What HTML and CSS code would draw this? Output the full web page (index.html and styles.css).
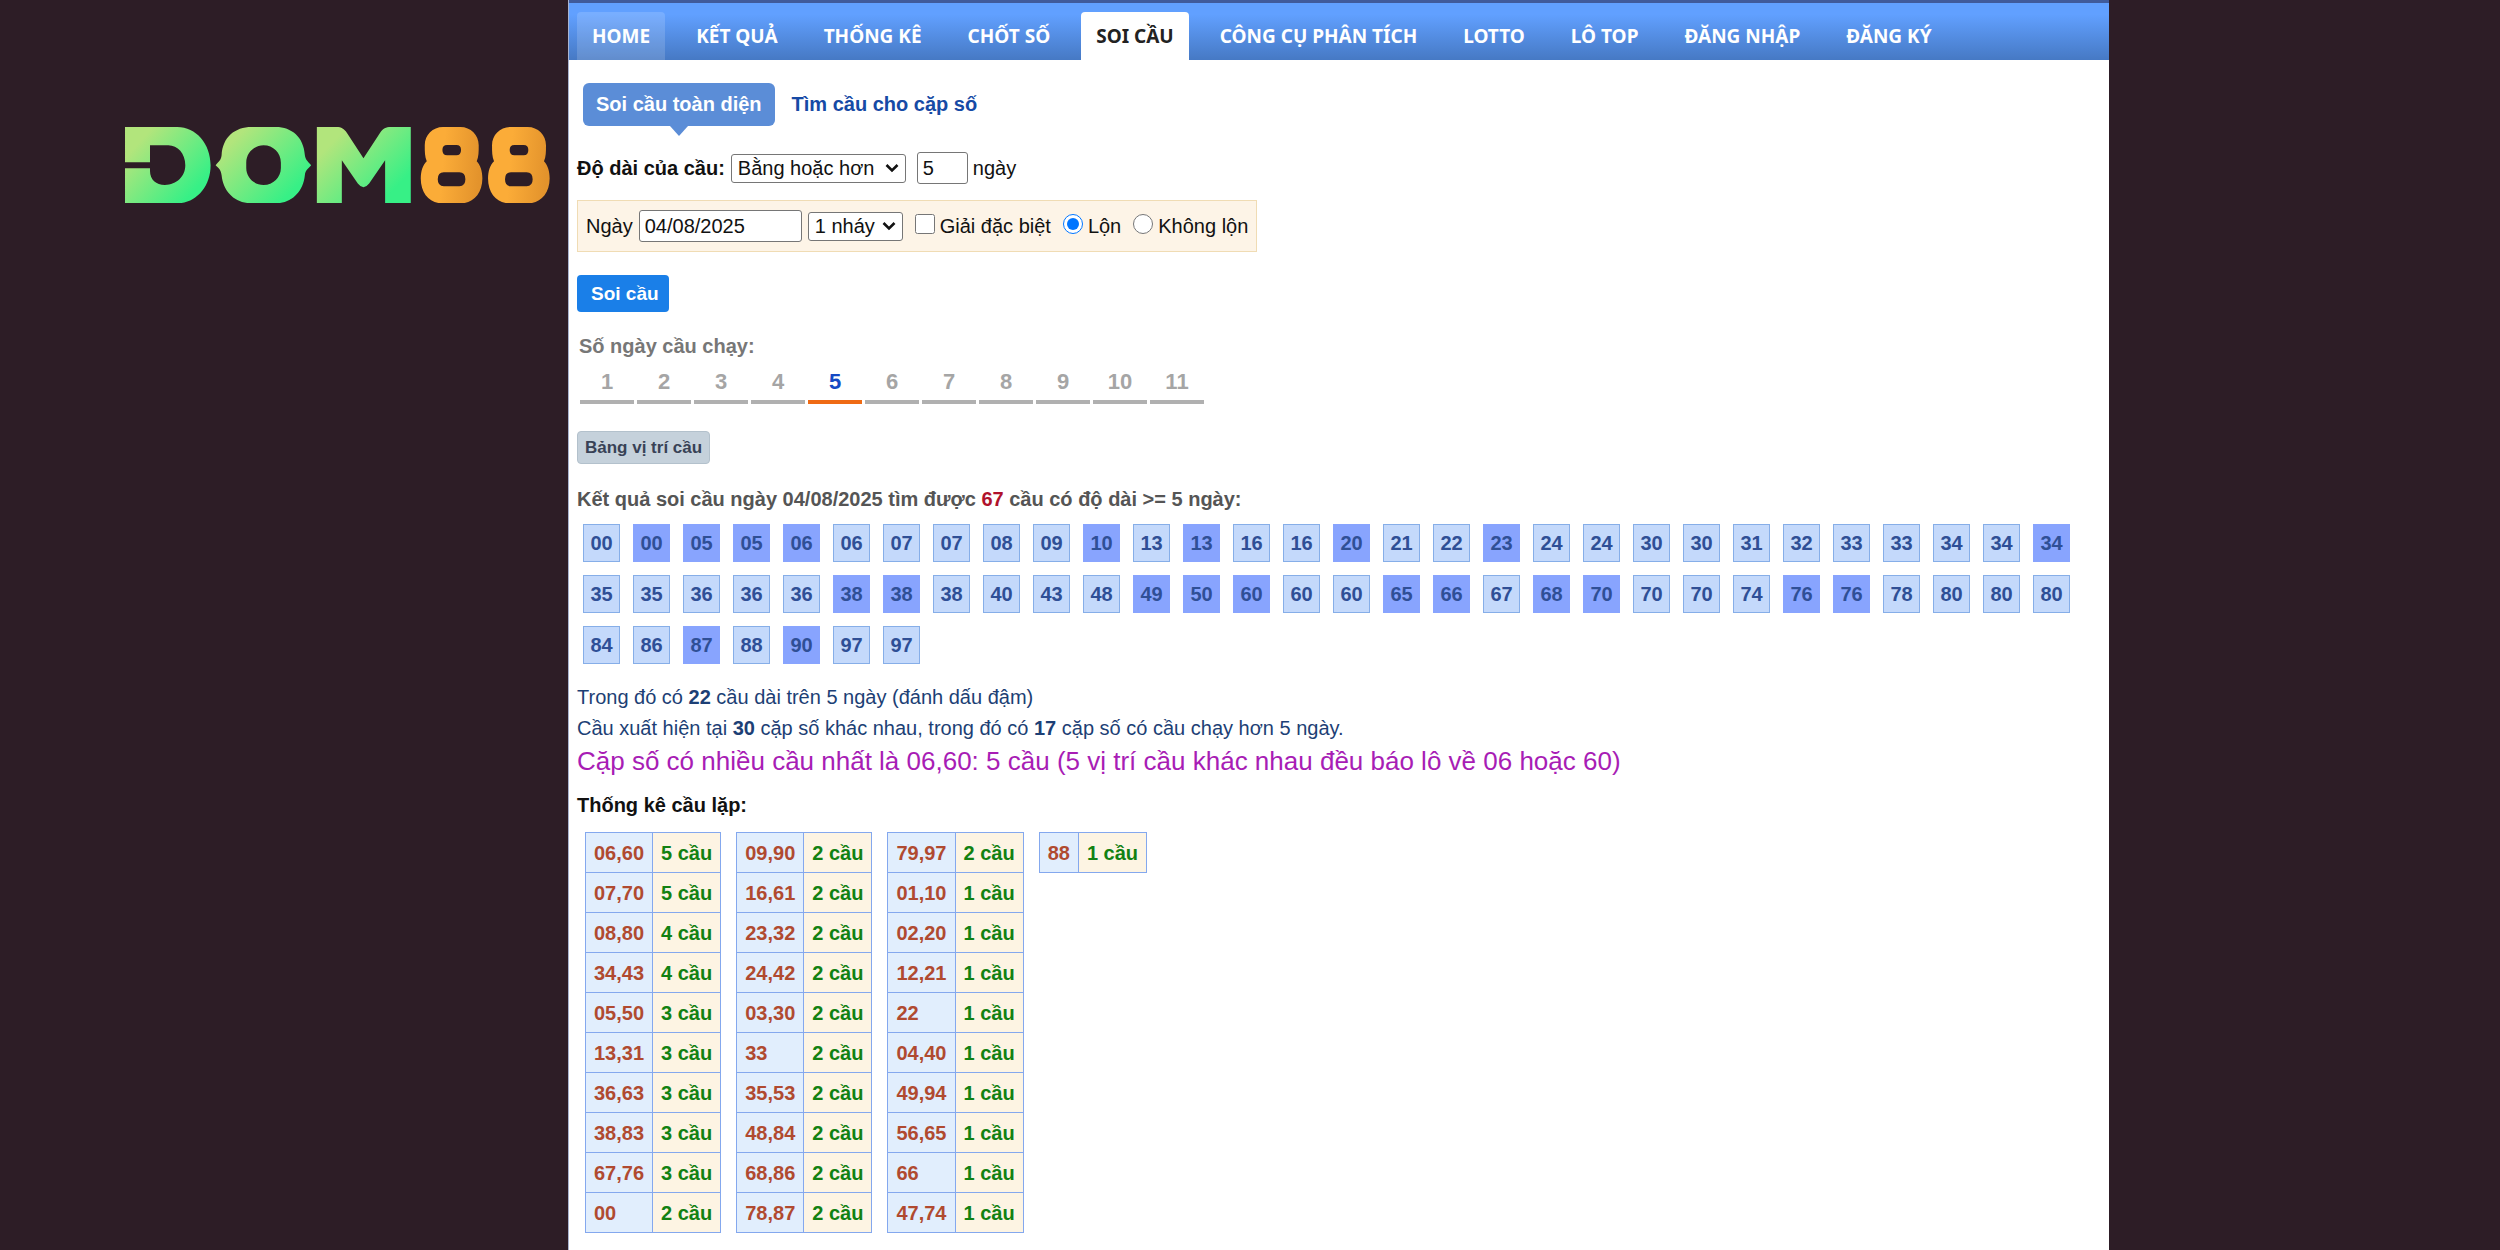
FILE: index.html
```html
<!DOCTYPE html>
<html lang="vi">
<head>
<meta charset="utf-8">
<meta name="viewport" content="width=device-width, initial-scale=1">
<title>Soi cầu toàn diện</title>
<link rel="stylesheet" href="styles.css">
</head>
<body>
<div class="page">
  <aside class="brand">
    <svg class="logo" viewBox="75 80 1276 229" role="img" aria-label="DOM88">
      <defs>
        <linearGradient id="green" x1="0" y1="0.1" x2="1" y2="0.9">
          <stop offset="0.15" stop-color="#b2e57c"/>
          <stop offset="0.85" stop-color="#37f086"/>
        </linearGradient>
        <linearGradient id="orange" x1="0" y1="0" x2="1" y2="0.1">
          <stop offset="0.4" stop-color="#fbac38"/>
          <stop offset="1" stop-color="#e3932c"/>
        </linearGradient>
      </defs>
      <path fill="url(#green)" d="M75 80H232C288 80 332 130 332 195S288 309 232 309H75V204H150V212C150 238 168 254 195 254C230 254 256 228 256 195C256 160 233 135 205 135H150V186H75Z"/>
      <path fill="url(#green)" fill-rule="evenodd" d="M455 80H528C575 80 612 110 615 165C617 178 622 182 634 195C622 208 617 210 615 225C610 275 575 309 528 309H455C405 309 370 275 365 225C363 210 358 205 347 195C358 182 363 180 365 165C368 110 405 80 455 80ZM491 135C462 135 439 158 439 187V203C439 231 462 254 491 254S543 231 543 203V187C543 158 520 135 491 135Z"/>
      <path fill="url(#green)" d="M651 80H710C725 80 733 86 741 97L791 174L841 97C850 85 858 80 873 80H933V309H856V180L808 250Q791 272 774 250L726 180V309H651Z"/>
      <g id="eight">
        <path fill="url(#orange)" fill-rule="evenodd" d="M1030 80H1082C1113 80 1137 104 1137 135C1137 155 1137 170 1131 183C1142 195 1148 212 1148 235C1148 280 1120 309 1085 309H1026C990 309 963 280 963 235C963 212 969 195 981 183C975 170 975 155 975 135C975 104 999 80 1030 80ZM1042 134Q1028 134 1028 149Q1028 165 1042 165H1070Q1084 165 1084 149Q1084 134 1070 134ZM1032 216Q1014 216 1014 237Q1014 258 1032 258H1079Q1097 258 1097 237Q1097 216 1079 216Z"/>
      </g>
      <use href="#eight" x="202"/>
    </svg>
  </aside>

  <main class="panel">
    <nav class="menu">
      <a class="menu-item home" href="#">HOME</a>
      <a class="menu-item" href="#">KẾT QUẢ</a>
      <a class="menu-item" href="#">THỐNG KÊ</a>
      <a class="menu-item" href="#">CHỐT SỐ</a>
      <a class="menu-item current" href="#">SOI CẦU</a>
      <a class="menu-item" href="#">CÔNG CỤ PHÂN TÍCH</a>
      <a class="menu-item" href="#">LOTTO</a>
      <a class="menu-item" href="#">LÔ TOP</a>
      <a class="menu-item" href="#">ĐĂNG NHẬP</a>
      <a class="menu-item" href="#">ĐĂNG KÝ</a>
    </nav>

    <div class="content">
      <div class="subtabs">
        <a class="subtab active" href="#">Soi cầu toàn diện</a>
        <a class="subtab" href="#">Tìm cầu cho cặp số</a>
      </div>

      <form>
        <div class="row">
          <label class="strong" for="mode">Độ dài của cầu:</label>
          <select class="field mode" id="mode"><option>Bằng hoặc hơn</option></select>
          <input class="field length" id="length" type="text" value="5">
          <label class="unit" for="length">ngày</label>
        </div>
        <div class="filter">
          <label for="date">Ngày</label>
          <input class="field date" id="date" type="text" value="04/08/2025">
          <select class="field hits" aria-label="Số nháy"><option>1 nháy</option></select>
          <span class="choice"><input type="checkbox" id="special"><label for="special">Giải đặc biệt</label></span>
          <span class="choice"><input type="radio" name="swap" id="swap" checked><label for="swap">Lộn</label></span>
          <span class="choice"><input type="radio" name="swap" id="noswap"><label for="noswap">Không lộn</label></span>
        </div>
        <button class="submit" type="submit">Soi cầu</button>
      </form>

      <h2 class="days-title">Số ngày cầu chạy:</h2>
      <div class="days">
        <a href="#">1</a><a href="#">2</a><a href="#">3</a><a href="#">4</a><a class="on" href="#">5</a><a href="#">6</a><a href="#">7</a><a href="#">8</a><a href="#">9</a><a href="#">10</a><a href="#">11</a>
      </div>

      <button class="positions" type="button">Bảng vị trí cầu</button>

      <h2 class="result-title">Kết quả soi cầu ngày 04/08/2025 tìm được <span class="count">67</span> cầu có độ dài &gt;= 5 ngày:</h2>
      <ul class="chips">
        <li>00</li><li class="hot">00</li><li class="hot">05</li><li class="hot">05</li><li class="hot">06</li><li>06</li><li>07</li><li>07</li><li>08</li><li>09</li>
        <li class="hot">10</li><li>13</li><li class="hot">13</li><li>16</li><li>16</li><li class="hot">20</li><li>21</li><li>22</li><li class="hot">23</li><li>24</li>
        <li>24</li><li>30</li><li>30</li><li>31</li><li>32</li><li>33</li><li>33</li><li>34</li><li>34</li><li class="hot">34</li>
        <li>35</li><li>35</li><li>36</li><li>36</li><li>36</li><li class="hot">38</li><li class="hot">38</li><li>38</li><li>40</li><li>43</li>
        <li>48</li><li class="hot">49</li><li class="hot">50</li><li class="hot">60</li><li>60</li><li>60</li><li class="hot">65</li><li class="hot">66</li><li>67</li><li class="hot">68</li>
        <li class="hot">70</li><li>70</li><li>70</li><li>74</li><li class="hot">76</li><li class="hot">76</li><li>78</li><li>80</li><li>80</li><li>80</li>
        <li>84</li><li>86</li><li class="hot">87</li><li>88</li><li class="hot">90</li><li>97</li><li>97</li>
      </ul>

      <div class="summary">
        <p>Trong đó có <b>22</b> cầu dài trên 5 ngày (đánh dấu đậm)</p>
        <p>Cầu xuất hiện tại <b>30</b> cặp số khác nhau, trong đó có <b>17</b> cặp số có cầu chạy hơn 5 ngày.</p>
        <p class="top-pair">Cặp số có nhiều cầu nhất là 06,60: 5 cầu (5 vị trí cầu khác nhau đều báo lô về 06 hoặc 60)</p>
      </div>

      <h2 class="repeat-title">Thống kê cầu lặp:</h2>
      <div class="tables">
        <table>
          <tr><th scope="row">06,60</th><td>5 cầu</td></tr>
          <tr><th scope="row">07,70</th><td>5 cầu</td></tr>
          <tr><th scope="row">08,80</th><td>4 cầu</td></tr>
          <tr><th scope="row">34,43</th><td>4 cầu</td></tr>
          <tr><th scope="row">05,50</th><td>3 cầu</td></tr>
          <tr><th scope="row">13,31</th><td>3 cầu</td></tr>
          <tr><th scope="row">36,63</th><td>3 cầu</td></tr>
          <tr><th scope="row">38,83</th><td>3 cầu</td></tr>
          <tr><th scope="row">67,76</th><td>3 cầu</td></tr>
          <tr><th scope="row">00</th><td>2 cầu</td></tr>
        </table>
        <table>
          <tr><th scope="row">09,90</th><td>2 cầu</td></tr>
          <tr><th scope="row">16,61</th><td>2 cầu</td></tr>
          <tr><th scope="row">23,32</th><td>2 cầu</td></tr>
          <tr><th scope="row">24,42</th><td>2 cầu</td></tr>
          <tr><th scope="row">03,30</th><td>2 cầu</td></tr>
          <tr><th scope="row">33</th><td>2 cầu</td></tr>
          <tr><th scope="row">35,53</th><td>2 cầu</td></tr>
          <tr><th scope="row">48,84</th><td>2 cầu</td></tr>
          <tr><th scope="row">68,86</th><td>2 cầu</td></tr>
          <tr><th scope="row">78,87</th><td>2 cầu</td></tr>
        </table>
        <table>
          <tr><th scope="row">79,97</th><td>2 cầu</td></tr>
          <tr><th scope="row">01,10</th><td>1 cầu</td></tr>
          <tr><th scope="row">02,20</th><td>1 cầu</td></tr>
          <tr><th scope="row">12,21</th><td>1 cầu</td></tr>
          <tr><th scope="row">22</th><td>1 cầu</td></tr>
          <tr><th scope="row">04,40</th><td>1 cầu</td></tr>
          <tr><th scope="row">49,94</th><td>1 cầu</td></tr>
          <tr><th scope="row">56,65</th><td>1 cầu</td></tr>
          <tr><th scope="row">66</th><td>1 cầu</td></tr>
          <tr><th scope="row">47,74</th><td>1 cầu</td></tr>
        </table>
        <table>
          <tr><th scope="row">88</th><td>1 cầu</td></tr>
        </table>
      </div>
    </div>
  </main>
</div>
</body>
</html>
```
FILE: styles.css
```css
* {
  box-sizing: border-box;
}

body {
  margin: 0;
  background: #2d1d26;
  color: #111;
  font: 20px/24px "Liberation Sans", Arial, sans-serif;
}

a {
  text-decoration: none;
}

h2,
p,
ul {
  margin: 0;
  padding: 0;
  font-size: 20px;
}

.page {
  display: grid;
  grid-template-columns: 568fr 1541fr 391fr;
  min-height: 100vh;
}

.brand {
  padding: 127px 18px 0 125px;
}

.logo {
  display: block;
  width: 100%;
}

.panel {
  min-width: 0;
  background: #fff;
  border-left: 1px solid #a9b4d0;
}

/* main menu */
.menu {
  display: flex;
  gap: 16px;
  height: 60px;
  padding: 9px 8px 0;
  border-top: 3px solid #405b9b;
  background: linear-gradient(#61a0ff 20%, #4679c4);
}

.menu-item {
  padding: 0 15px;
  border-radius: 4px 4px 0 0;
  color: #fff;
  font: bold 19px/48px "Noto Sans", "Open Sans", sans-serif;
  white-space: nowrap;
}

.menu-item.home {
  background: rgba(255, 255, 255, 0.15);
}

.menu-item.current {
  background: #fff;
  color: #222;
}

.content {
  padding: 23px 8px 16px;
}

/* sub tabs */
.subtabs {
  display: flex;
  gap: 4px;
  padding-left: 6px;
}

.subtab {
  padding: 0 13px;
  color: #164aa5;
  font-weight: bold;
  line-height: 43px;
}

.subtab.active {
  position: relative;
  border-radius: 6px;
  background: #5b8dd7;
  color: #fff;
}

.subtab.active::after {
  content: "";
  position: absolute;
  top: 100%;
  left: 50%;
  margin-left: -9px;
  border: 9px solid transparent;
  border-top: 10px solid #5b8dd7;
  border-bottom: 0;
}

/* form */
.row {
  display: flex;
  align-items: center;
  margin-top: 26px;
}

.strong {
  font-weight: bold;
}

.field {
  margin: 0;
  padding: 0 5px;
  height: 32px;
  border: 1px solid #767676;
  border-radius: 3px;
  background: #fff;
  color: #111;
  font: inherit;
}

select.field {
  appearance: none;
  height: 29px;
  padding: 0 24px 0 6px;
  background: #fff url("data:image/svg+xml,%3Csvg xmlns='http://www.w3.org/2000/svg' viewBox='0 0 14 10'%3E%3Cpath d='M1.500 2l5.500 5.500L12.500 2' fill='none' stroke='%23111' stroke-width='2.600'/%3E%3C/svg%3E") no-repeat right 6px center / 14px 10px;
}

.mode {
  width: 175px;
  margin: 0 11px 0 6px;
}

.length {
  width: 51px;
}

.unit {
  margin-left: 5px;
}

.filter {
  display: flex;
  align-items: center;
  width: fit-content;
  margin-top: 16px;
  padding: 9px 8px;
  border: 1px solid #f0dcb4;
  background: #fdf4e7;
}

.date {
  width: 163px;
  margin: 0 6px;
}

.hits {
  width: 95px;
}

.choice {
  display: flex;
  align-items: center;
  gap: 5px;
  margin-left: 12px;
}

.choice input {
  width: 20px;
  height: 20px;
  margin: 0 0 4px;
}

.submit {
  display: block;
  margin-top: 23px;
  padding: 0 10px 0 14px;
  border: 0;
  border-radius: 4px;
  background: #1a7fe8;
  color: #fff;
  font: bold 19px/37px "Liberation Sans", Arial, sans-serif;
}

/* day picker */
.days-title {
  margin: 22px 0 0 2px;
  color: #777;
}

.days {
  display: flex;
  gap: 3px;
  margin: 12px 0 0 3px;
}

.days a {
  width: 54px;
  padding-bottom: 6px;
  border-bottom: 4px solid #b0b0b0;
  color: #a5a5a5;
  font-size: 22px;
  font-weight: bold;
  text-align: center;
}

.days a.on {
  border-color: #ef6a14;
  color: #1549c4;
}

.positions {
  display: block;
  margin-top: 27px;
  padding: 0 7px;
  border: 1px solid #b3c1cc;
  border-radius: 4px;
  background: #c5d1db;
  color: #384256;
  font: bold 17px/31px "Liberation Sans", Arial, sans-serif;
}

/* results */
.result-title {
  margin-top: 23px;
  color: #555;
}

.count {
  color: #b0122c;
}

.chips {
  display: flex;
  flex-wrap: wrap;
  gap: 13px;
  margin: 13px 0 0 6px;
  list-style: none;
}

.chips li {
  width: 37px;
  border: 1px solid #86aee8;
  background: #c4d9fb;
  color: #2f4f96;
  font-weight: bold;
  line-height: 36px;
  text-align: center;
}

.chips .hot {
  border-color: #88a4fe;
  background: #88a4fe;
}

.summary {
  margin-top: 18px;
  color: #1d3f75;
  line-height: 31px;
}

.summary .top-pair {
  padding-top: 2px;
  color: #a81db5;
  font-size: 26px;
}

.repeat-title {
  margin-top: 16px;
  color: #111;
}

.tables {
  display: flex;
  align-items: flex-start;
  gap: 15px;
  margin: 15px 0 0 8px;
}

table {
  border-collapse: collapse;
}

th,
td {
  height: 40px;
  padding: 0 8px;
  border: 1px solid #84a8ee;
  font-weight: bold;
  text-align: left;
}

th {
  background: #e1eefd;
  color: #b04a30;
}

td {
  background: #fdf4e3;
  color: #128112;
}
```
